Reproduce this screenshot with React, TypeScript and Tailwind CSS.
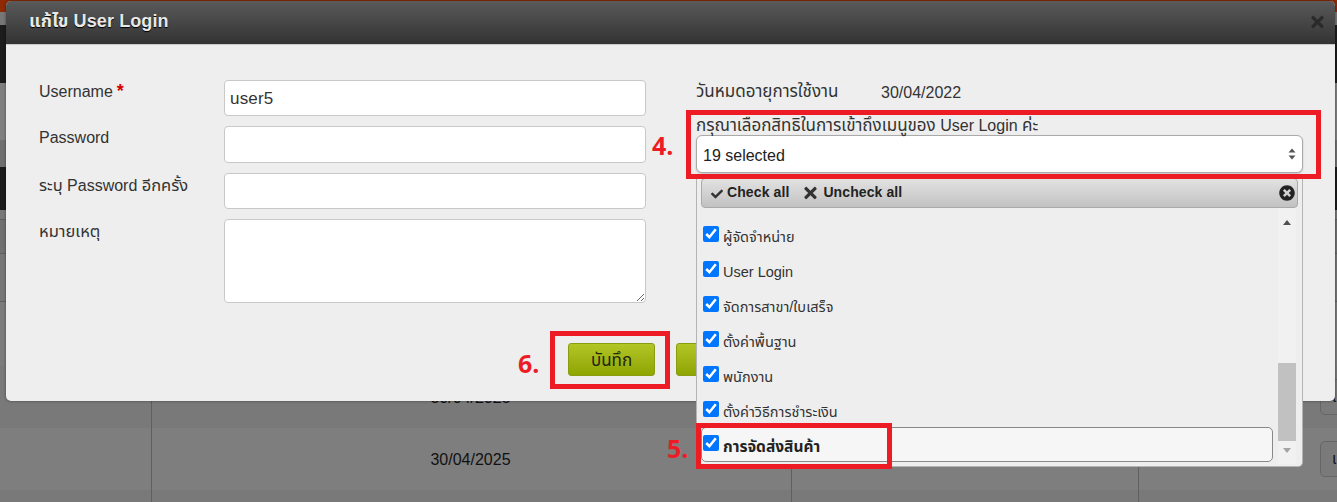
import { FaCheck, FaTimes, FaTimesCircle } from "react-icons/fa";

const font = "[font-family:'Liberation_Sans','Noto_Sans_Thai','Noto_Sans',sans-serif]";

const items = ["ผู้จัดจำหน่าย", "User Login", "จัดการสาขา/ใบเสร็จ", "ตั้งค่าพื้นฐาน", "พนักงาน", "ตั้งค่าวิธีการชำระเงิน"];

function Row({ date, btn, h = "h-[62px]", band = "" }: { date?: string; btn?: string; h?: string; band?: string }) {
  return (
    <div className={`grid grid-cols-[152px_640px_347px_198px] shrink-0 ${h} ${band}`}>
      <div className="border-r border-[#5f5f5f]" />
      <div className="border-r border-[#5f5f5f] flex items-center justify-center pr-[2px] pt-[2px] text-[16px] text-[#111]">{date}</div>
      <div className="border-r border-[#5f5f5f]" />
      <div className="flex items-center pl-[181px]">
        {btn && (
          <div className="h-[36px] w-[60px] shrink-0 rounded-[5px] border border-[#666] bg-[#7a7a7a] pl-[11px] text-[15px] leading-[34px] text-[#111]">
            {btn}
          </div>
        )}
      </div>
    </div>
  );
}

function Field({ label, req, h, children }: { label: React.ReactNode; req?: boolean; h: string; children?: React.ReactNode }) {
  return (
    <div className={`grid grid-cols-[185px_422px] ${h}`}>
      <div className="text-[16px] leading-[22px] pt-[1px] text-[#333]">
        {label}
        {req && <span className="ml-[4px] text-[18px] font-bold leading-none text-[#d40000]">*</span>}
      </div>
      {children}
    </div>
  );
}

const inputCls = "h-full w-full rounded-[4px] border border-[#c8c8c8] bg-white px-[5px] pt-[1px] text-[17px] tracking-[0.2px] text-[#333] outline-none";

export default function App() {
  return (
    <div className={`relative h-[502px] w-[1337px] overflow-hidden bg-[#7c7c7c] ${font}`}>
      {/* page behind the dialog */}
      <div className="flex h-full flex-col">
        <div className="h-[12px] shrink-0 bg-[#8e2a06]" />
        <div className="h-[13px] shrink-0 bg-[#777]" />
        <div className="h-[58px] shrink-0 bg-[#1c1c1c]" />
        <div className="h-[57px] shrink-0 bg-[#7f7f7f]" />
        <div className="h-[27px] shrink-0 bg-[#6f6f6f]" />
        <div className="h-[43px] shrink-0 bg-[#1b1b1b]" />
        <div className="h-[9px] shrink-0 bg-[#777]" />
        <div className="h-[34px] shrink-0 border-t border-[#5f5f5f] bg-[#707070]" />
        <div className="h-[49px] shrink-0 border-y border-[#5f5f5f] bg-[#767676]" />
        <Row h="h-[64px]" />
        <Row date="30/04/2025" btn="แ" band="bg-[#797979]" />
        <Row date="30/04/2025" btn="แ" band="bg-[#7e7e7e]" />
        <Row band="bg-[#797979]" />
      </div>

      {/* dialog */}
      <div className="absolute left-[6px] top-[1px] flex h-[400px] w-[1329px] flex-col rounded-[5px] bg-[#eeeeee] shadow-[0_0_3px_rgba(0,0,0,0.45)]">
        <div className="flex h-[44px] shrink-0 items-center justify-between rounded-t-[5px] border-b border-[#c9c9c9] bg-gradient-to-b from-[#5a5a5a] to-[#333333] pb-[2px] pl-[23px] pr-[11px]">
          <span className="text-[18px] font-bold tracking-[0.1px] text-[#e8e8e8] [text-shadow:0_1px_1px_#000]">แก้ไข User Login</span>
          <FaTimes className="h-[18px] w-[13px] text-[#2a2a2a]" />
        </div>
        <div className="flex flex-1">
          {/* left column */}
          <div className="flex w-[657px] shrink-0 flex-col pl-[33px] pt-[35px]">
            <Field label="Username" req h="h-[46px] pb-[10px]">
              <input className={inputCls} defaultValue="user5" />
            </Field>
            <Field label="Password" h="h-[47px] pb-[10px]">
              <input className={inputCls} />
            </Field>
            <Field label={<><span className="text-[16.5px]">ระบุ</span> Password <span className="text-[16.5px]">อีกครั้ง</span></>} h="h-[46px] pb-[10px]">
              <input className={inputCls} />
            </Field>
            <Field label={<span className="text-[16.5px]">หมายเหตุ</span>} h="h-[84px]">
              <textarea className={inputCls} />
            </Field>
            <div className="mt-[40px] flex gap-[21px] pl-[529px]">
              <button className="h-[33px] w-[87px] shrink-0 rounded-[3px] border border-[#8a9c10] bg-gradient-to-b from-[#b2c624] to-[#8fa500] pt-[3px] text-[17px] text-[#23230f]">
                บันทึก
              </button>
              <div className="h-[33px] w-[87px] shrink-0 rounded-[3px] border border-[#8a9c10] bg-gradient-to-b from-[#b2c624] to-[#8fa500]" />
            </div>
          </div>
          {/* right column */}
          <div className="flex-1 pl-[33px] pt-[36px] text-[16px] text-[#333]">
            <div className="flex h-[22px] leading-[22px]">
              <span className="w-[185px] text-[17px]">วันหมดอายุการใช้งาน</span>
              <span className="pt-[1px]">30/04/2022</span>
            </div>
          </div>
        </div>
      </div>

      {/* open multiselect, spills past the dialog */}
      <div className="absolute left-[696px] top-[113px] w-[607px] text-[#333]">
        <div className="h-[22px] pt-[2px] text-[16px] leading-[22px]">
          <span className="text-[17px]">กรุณาเลือกสิทธิในการเข้าถึงเมนูของ</span> User Login <span className="text-[17px]">ค่ะ</span>
        </div>
        <div className="flex h-[38px] items-center justify-between rounded-[6px] border border-[#aaa] bg-white pl-[6px] pr-[6px] pt-[3px] text-[16px] text-[#222] shadow-[0_1px_2px_rgba(0,0,0,0.2)]">
          <span>19 selected</span>
          <svg width="8" height="12" viewBox="0 0 8 12" className="mb-[3px] text-[#555]">
            <path d="M4 0.5 L7.5 4.5 H0.5 Z M4 11.5 L0.5 7.5 H7.5 Z" fill="currentColor" />
          </svg>
        </div>
        <div className="mt-[5px] h-[289px] rounded-b-[5px] border border-t-0 border-[#b4b4b4] bg-[#eeeeee]">
          <div className="mx-[4px] flex h-[30px] items-center rounded-[4px] border border-[#aaa] bg-gradient-to-b from-[#e2e2e2] to-[#c2c2c2] pb-[1px] pl-[8px] pr-[2px] text-[14px] font-bold tracking-[0.1px] text-[#222]">
            <FaCheck className="mt-[3px] h-[12px] w-[14px] text-[#333]" />
            <span className="ml-[3px]">Check all</span>
            <FaTimes className="ml-[15px] h-[18px] w-[13px] text-[#333]" />
            <span className="ml-[6px]">Uncheck all</span>
            <FaTimesCircle className="ml-auto h-[16px] w-[16px] text-[#222]" />
          </div>
          <div className="relative flex h-[258px]">
            <div className="flex-1 pl-[5px] pt-[10px]">
              {items.map((t) => (
                <label key={t} className="flex h-[35px] items-center pr-[7px] text-[#333]">
                  <input type="checkbox" defaultChecked className="mb-[4px] ml-[1px] h-[16px] w-[16px] shrink-0" />
                  <span className="ml-[4px] pt-[4px] text-[14.5px]">{t}</span>
                </label>
              ))}
              <label className="ml-[-1px] mr-[5px] mt-[-1px] flex h-[35px] items-center rounded-[5px] border border-[#888] bg-[#f6f6f6] text-[15.5px] font-bold text-[#222]">
                <input type="checkbox" defaultChecked className="mb-[4px] ml-[1px] h-[16px] w-[16px] shrink-0" />
                <span className="ml-[4px] pt-[4px]">การจัดส่งสินค้า</span>
              </label>
            </div>
            <div className="mb-[2px] mr-[6px] flex w-[18px] shrink-0 flex-col items-center bg-[#f1f1f1]">
              <svg width="8" height="5" viewBox="0 0 8 5" className="mt-[12px] text-[#505050]">
                <path d="M4 0 L8 5 H0 Z" fill="currentColor" />
              </svg>
              <div className="mt-[138px] h-[78px] w-full bg-[#c1c1c1]" />
              <svg width="8" height="5" viewBox="0 0 8 5" className="mt-[7px] text-[#a3a3a3]">
                <path d="M0 0 H8 L4 5 Z" fill="currentColor" />
              </svg>
            </div>
          </div>
        </div>
      </div>

      {/* annotations */}
      <div className="absolute left-[686px] top-[110px] h-[69px] w-[635px] border-[5px] border-[#ed1c24]" />
      <div className="absolute left-[696px] top-[423px] h-[46px] w-[196px] border-[5px] border-[#ed1c24]" />
      <div className="absolute left-[550px] top-[331px] h-[58px] w-[120px] border-[5px] border-[#ed1c24]" />
      <span className="absolute left-[652px] top-[128px] text-[25px] font-bold leading-[34px] text-[#ed1c24] [font-family:'Open_Sans',sans-serif]">4.</span>
      <span className="absolute left-[667px] top-[431px] text-[25px] font-bold leading-[34px] text-[#ed1c24] [font-family:'Open_Sans',sans-serif]">5.</span>
      <span className="absolute left-[518px] top-[346px] text-[25px] font-bold leading-[34px] text-[#ed1c24] [font-family:'Open_Sans',sans-serif]">6.</span>
    </div>
  );
}
